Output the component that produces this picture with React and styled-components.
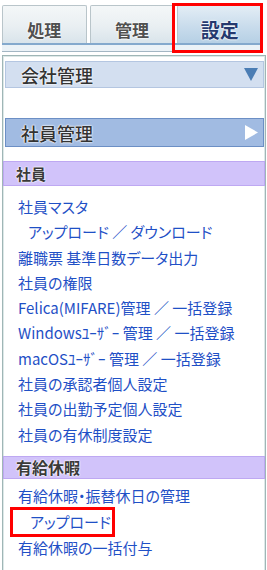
import React from "react";
import styled, { createGlobalStyle } from "styled-components";

const GlobalStyle = createGlobalStyle`
  html, body {
    margin: 0;
    padding: 0;
    background: #fff;
  }
  body {
    font-family: "Noto Sans CJK JP", "Noto Sans", sans-serif;
  }
`;

const Screen = styled.div`
  position: relative;
  width: 267px;
  height: 570px;
  overflow: hidden;
`;

const TabBar = styled.div`
  display: flex;
  gap: 3px;
  height: 43px;
  padding: 5px 5px 0 2px;
  box-sizing: border-box;
`;

const Tab = styled.div`
  flex: 1;
  display: flex;
  align-items: center;
  justify-content: center;
  padding-top: 10px;
  box-sizing: border-box;
  border: 1px solid #b9c5ca;
  border-bottom: none;
  border-radius: 2px 2px 0 0;
  background: ${(p) =>
    p.$active
      ? "linear-gradient(#e3edf5, #c9dcec 55%, #b6d0e5)"
      : "linear-gradient(#f4f7f8, #e9eff2 55%, #d9e4eb)"};
  font-size: ${(p) => (p.$active ? "19px" : "17px")};
  font-weight: 700;
  color: ${(p) => (p.$active ? "#25396f" : "#505050")};
  text-shadow: 0 0 2px #fff, 0 0 2px #fff, 0 0 1px #fff;
`;

const TabRule = styled.div`
  height: 9px;
  margin: 0 5px 0 2px;
  box-sizing: border-box;
  border-top: 2px solid #84a9cd;
  border-bottom: 1px solid #a3b6c3;
  background: #ebf2f7;
`;

const Annotation = styled.div`
  position: absolute;
  left: ${(p) => p.$x}px;
  top: ${(p) => p.$y}px;
  width: ${(p) => p.$w}px;
  height: ${(p) => p.$h}px;
  box-sizing: border-box;
  border: 3px solid #ff0000;
  pointer-events: none;
`;

const Panel = styled.div`
  margin: 3px 1px 0 2px;
  min-height: 600px;
  padding-top: 5px;
  box-sizing: border-box;
  border: 1px solid #9fb6b6;
  box-shadow: inset 0 0 0 1px #dde8e8;
`;

const Header = styled.div`
  display: flex;
  align-items: center;
  justify-content: space-between;
  height: ${(p) => p.$h}px;
  margin: 0 1px ${(p) => p.$gap}px 2px;
  padding: 0 5px 0 15px;
  box-sizing: border-box;
  border: 1px solid ${(p) => (p.$open ? "#6c8fc5" : "#b4c6e1")};
  background: ${(p) => (p.$open ? "#a1bbe2" : "#d3dff0")};
  font-size: 18px;
  font-weight: 500;
  color: #333;
  text-shadow: 0 0 2px #fff, 0 0 2px #fff, 0 0 1px #fff;
`;

const SectionBar = styled.div`
  display: flex;
  align-items: center;
  height: ${(p) => p.$h}px;
  padding-left: 12px;
  box-sizing: border-box;
  border: 1px solid #bea8f2;
  background: #d1c3fa;
  font-size: ${(p) => p.$size}px;
  font-weight: 700;
  color: #3a3a3a;
  text-shadow: 0 0 2px #fff, 0 0 2px #fff, 0 0 1px #fff;
`;

const LinkList = styled.div`
  display: flex;
  flex-direction: column;
  padding: ${(p) => p.$top}px 0 ${(p) => p.$bottom}px 0;
`;

const MenuLink = styled.a`
  display: block;
  padding-left: ${(p) => (p.$sub ? 25 : 15)}px;
  line-height: ${(p) => p.$lh || 25.3}px;
  font-size: 15px;
  font-feature-settings: "palt";
  color: #1f50c6;
  text-decoration: none;
  white-space: nowrap;
  cursor: pointer;
`;

const MarkedLink = styled.a`
  display: block;
  width: 105px;
  height: 30px;
  margin-left: 7px;
  padding-left: 17px;
  box-sizing: border-box;
  border: 3px solid #ff0000;
  line-height: 24px;
  font-size: 15px;
  font-feature-settings: "palt";
  color: #1f50c6;
  text-decoration: none;
  white-space: nowrap;
  cursor: pointer;
`;

const Arrow = ({ dir, color }) =>
  dir === "down" ? (
    <svg width="14" height="13" viewBox="0 0 14 13">
      <polygon points="0,0 14,0 7,13" fill={color} />
    </svg>
  ) : (
    <svg width="13" height="15" viewBox="0 0 13 15">
      <polygon points="0,0 13,7.5 0,15" fill={color} />
    </svg>
  );

const staffLinks = [
  { label: "社員マスタ" },
  { label: "アップロード ／ ダウンロード", sub: true },
  { label: "離職票 基準日数データ出力" },
  { label: "社員の権限" },
  { label: "Felica(MIFARE)管理 ／ 一括登録" },
  { label: "Windowsﾕｰｻﾞｰ 管理 ／ 一括登録" },
  { label: "macOSﾕｰｻﾞｰ 管理 ／ 一括登録" },
  { label: "社員の承認者個人設定" },
  { label: "社員の出勤予定個人設定" },
  { label: "社員の有休制度設定" },
];

const App = () => {
  return (
    <Screen>
      <GlobalStyle />
      <TabBar>
        <Tab>処理</Tab>
        <Tab>管理</Tab>
        <Tab $active>設定</Tab>
      </TabBar>
      <TabRule />
      <Panel>
        <Header $h={27} $gap={30}>
          会社管理
          <Arrow dir="down" color="#4b7db4" />
        </Header>
        <Header $h={29} $gap={14} $open>
          社員管理
          <Arrow dir="right" color="#ffffff" />
        </Header>

        <SectionBar $h={25} $size={15}>社員</SectionBar>
        <LinkList $top={8} $bottom={9}>
          {staffLinks.map((l) => (
            <MenuLink key={l.label} $sub={l.sub}>
              {l.label}
            </MenuLink>
          ))}
        </LinkList>

        <SectionBar $h={23} $size={16}>有給休暇</SectionBar>
        <LinkList $top={6} $bottom={0}>
          <MenuLink $lh={22}>有給休暇・振替休日の管理</MenuLink>
          <MarkedLink>アップロード</MarkedLink>
          <MenuLink $lh={22}>有給休暇の一括付与</MenuLink>
        </LinkList>
      </Panel>
      <Annotation $x={172} $y={3} $w={91} $h={50} />
    </Screen>
  );
};

export default App;
